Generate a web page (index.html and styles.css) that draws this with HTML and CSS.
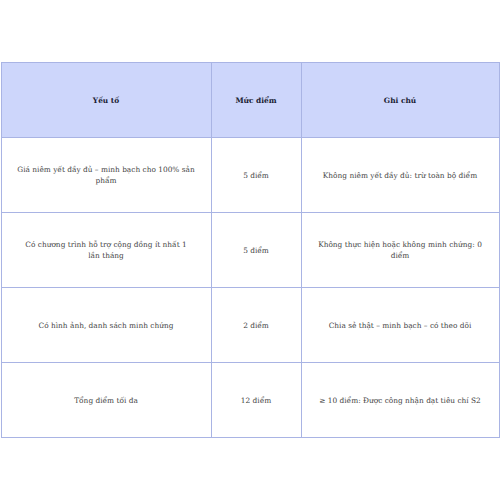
FILE: index.html
```html
<!DOCTYPE html>
<html lang="vi">
<head>
<meta charset="utf-8">
<link rel="stylesheet" href="styles.css">
</head>
<body>
<div class="page">
<table class="score">
  <colgroup><col class="c1"><col class="c2"><col class="c3"></colgroup>
  <thead>
    <tr><th>Yếu tố</th><th>Mức điểm</th><th>Ghi chú</th></tr>
  </thead>
  <tbody>
    <tr><td>Giá niêm yết đầy đủ – minh bạch cho 100% sản phẩm</td><td>5 điểm</td><td>Không niêm yết đầy đủ: trừ toàn bộ điểm</td></tr>
    <tr><td>Có chương trình hỗ trợ cộng đồng ít nhất 1 lần&nbsp;tháng</td><td>5 điểm</td><td>Không thực hiện hoặc không minh chứng: 0 điểm</td></tr>
    <tr><td>Có hình ảnh, danh sách minh chứng</td><td>2 điểm</td><td>Chia sẻ thật – minh bạch – có theo dõi</td></tr>
    <tr><td>Tổng điểm tối đa</td><td>12 điểm</td><td>≥ 10 điểm: Được công nhận đạt tiêu chí S2</td></tr>
  </tbody>
</table>
</div>
</body>
</html>
```
FILE: styles.css
```css
html, body { margin: 0; padding: 0; background: #fff; }
.page {
  width: 500px;
  height: 500px;
  display: flex;
  align-items: center;
  justify-content: center;
}
.score {
  border-collapse: collapse;
  width: 498px;
  table-layout: fixed;
  font-family: "DejaVu Serif", "Liberation Serif", serif;
  font-size: 7.4px;
  line-height: 11px;
  color: #444;
}
.c1 { width: 210px; }
.c2 { width: 90px; }
.c3 { width: 198px; }
.score th, .score td {
  border: 1px solid #a9b4e4;
  height: 74px;
  padding: 0 14px;
  text-align: center;
  vertical-align: middle;
}
.score th {
  background: #cdd6fb;
  font-weight: bold;
  color: #1a1d33;
}
```
